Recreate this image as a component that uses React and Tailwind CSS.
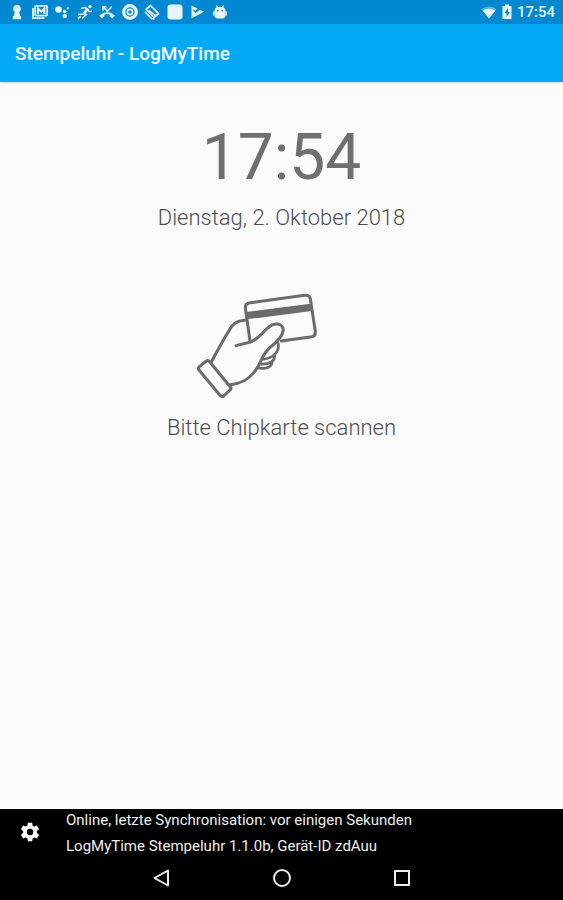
function StatusIcon({ children }) {
  return (
    <svg viewBox="0 0 16 16" className="size-4" fill="none" stroke="none" aria-hidden="true">
      {children}
    </svg>
  )
}

function StatusBar() {
  return (
    <div className="flex h-6 items-center justify-between bg-[#0288d1] pl-[9px] pr-2 text-[#e6f5fd]">
      <div className="flex w-[219px] justify-between">
        <StatusIcon>
          <path fill="currentColor" d="M8 0.8a4 4 0 0 1 2.3 7.2L11 11.5l1.2 1v2.7H3.8v-2.7l1.2-1L5.7 8A4 4 0 0 1 8 0.8z" />
        </StatusIcon>
        <StatusIcon>
          <path stroke="currentColor" strokeWidth="1.8" d="M1 4v10.2h11.5" />
          <rect x="3.2" y="1.8" width="12" height="9.8" rx="1" stroke="currentColor" strokeWidth="1.8" />
          <path stroke="currentColor" strokeWidth="2" d="M6 10V4.5l3.2 3.2 3.2-3.2V10" />
        </StatusIcon>
        <StatusIcon>
          <circle cx="4.5" cy="5.5" r="3.3" fill="currentColor" />
          <circle cx="10.7" cy="7.5" r="1.8" fill="currentColor" />
          <circle cx="13.8" cy="4.3" r="1.1" fill="currentColor" />
          <circle cx="10.8" cy="12" r="2.2" fill="currentColor" />
        </StatusIcon>
        <StatusIcon>
          <circle cx="13" cy="2.6" r="1.7" fill="currentColor" />
          <path stroke="currentColor" strokeWidth="1.6" strokeLinejoin="round" d="M4 4.5l4-1 3 2-4 4.5-6 .5M7 9.5l2.5 1-4.5 4M11 5.5l1 2h3M0.8 14.5l3-2" />
          <path stroke="currentColor" strokeWidth="2" d="M10 5L6.5 9.5" />
        </StatusIcon>
        <StatusIcon>
          <path stroke="currentColor" strokeWidth="1.5" d="M4 6.5V2.8h3.5M4 2.8l4.3 4.3 4.4-4.4" />
          <path fill="currentColor" d="M8 8.3c3 0 5.6 1.1 7.4 2.9.3.3.3.6 0 .9l-1.8 1.8c-.3.3-.6.3-.9 0l-2-1.4v-2a9 9 0 0 0-5.4 0v2l-2 1.4c-.3.3-.6.3-.9 0L.6 12.1c-.3-.3-.3-.6 0-.9A10.6 10.6 0 0 1 8 8.3z" />
        </StatusIcon>
        <StatusIcon>
          <circle cx="8" cy="8" r="6.3" stroke="currentColor" strokeWidth="3.2" />
          <circle cx="8" cy="8" r="2.6" stroke="currentColor" strokeWidth="1.6" />
        </StatusIcon>
        <StatusIcon>
          <path stroke="currentColor" strokeWidth="1.7" strokeLinejoin="round" d="M6.500 1.500L14.500 9.500 10 13.500 2 5.500z" />
          <path stroke="currentColor" strokeWidth="1.6" d="M1 8l6.500 6.500 3 .5M4.500 6.500l7 5" />
        </StatusIcon>
        <StatusIcon>
          <rect x="0.5" y="0.5" width="15" height="15" rx="3" fill="currentColor" />
        </StatusIcon>
        <StatusIcon>
          <path fill="currentColor" d="M2.5 1.5L8.5 4.5 6.5 7 4.8 5.5 4 6.5 6.8 9 11 5.7 15 7.8 2.5 14.5z" />
        </StatusIcon>
        <StatusIcon>
          <path stroke="currentColor" strokeWidth="1.3" d="M4.5 1.5L6 4M11.5 1.5L10 4" />
          <path fill="currentColor" fillRule="evenodd" d="M2.5 7a4 4 0 0 1 4-4h3a4 4 0 0 1 4 4v4a3 3 0 0 1-3 3.500h-5a3 3 0 0 1-3-3.500zM5 6v1.500h1.500V6zM9.500 6v1.500H11V6z" />
          <path stroke="currentColor" strokeWidth="1.5" d="M1.8 7.500v4M14.200 7.500v4" />
        </StatusIcon>
      </div>
      <div className="flex items-center">
        <svg viewBox="0 0 16 16" className="size-4" aria-hidden="true">
          <path fill="currentColor" opacity="0.4" d="M8 14.500L0.500 5.200a12 12 0 0 1 15 0z" />
          <path fill="currentColor" d="M8 14.500L1.800 6.800a10 10 0 0 1 12.400 0z" />
        </svg>
        <svg viewBox="0 0 12 16" className="ml-1 h-4 w-3" aria-hidden="true">
          <path fill="currentColor" fillRule="evenodd" d="M4 .5h4V2h2.500v13h-9V2H4zM7 4L3.500 9h2v4L9 8H7z" />
        </svg>
        <span className="ml-1 text-[15px] font-medium">17:54</span>
      </div>
    </div>
  )
}

function CardHand() {
  return (
    <svg
      viewBox="45 36 519 324"
      className="h-[108px] w-[173px] text-[#6b6b6b]"
      fill="none"
      stroke="currentColor"
      strokeWidth="9"
      strokeLinecap="round"
      strokeLinejoin="round"
      role="img"
      aria-label="Chipkarte"
    >
      <path d="M210 182L196 84Q195 72 207 69L374 46Q388 44 391 56L406 155Q407 167 396 170L304 183" />
      <path d="M199 107L394 82" strokeWidth="22" strokeLinecap="butt" />
      <path d="M198 120Q170 122 158 136Q146 150 94 246" />
      <path d="M168 197L212 186C238 178 252 146 278 134C298 127 312 138 309 154C306 170 296 180 282 192C250 216 248 234 236 256C218 290 194 310 150 314" />
      <path d="M294 188C300 212 284 234 248 238M284 222C286 246 268 254 238 252M276 246C276 262 258 268 232 264" strokeWidth="8" />
      <path d="M58 260L79 243Q84 239 89 245L151 321Q155 326 150 330L131 348Q126 352 121 347L57 270Q53 265 58 260Z" />
    </svg>
  )
}

function SettingsIcon() {
  return (
    <svg viewBox="0 0 24 24" className="size-[22px]" fill="currentColor" aria-hidden="true">
      <path d="M19.430 12.980c.04-.32.07-.64.07-.98s-.03-.66-.07-.98l2.110-1.650c.19-.15.240-.42.120-.64l-2-3.460c-.12-.22-.39-.3-.61-.22l-2.490 1c-.52-.4-1.080-.73-1.690-.98l-.38-2.650A.49.49 0 0 0 14 2h-4c-.25 0-.46.18-.49.42l-.38 2.650c-.61.25-1.170.59-1.690.98l-2.490-1c-.23-.09-.49 0-.61.22l-2 3.460c-.13.22-.07.49.120.64l2.110 1.650c-.04.32-.07.65-.07.98s.03.66.07.98l-2.110 1.650c-.19.15-.24.42-.12.64l2 3.460c.12.22.39.3.61.22l2.490-1c.52.4 1.080.73 1.690.98l.38 2.650c.03.24.24.42.49.42h4c.25 0 .46-.18.49-.42l.38-2.650c.61-.25 1.170-.59 1.690-.98l2.490 1c.23.09.49 0 .61-.22l2-3.460c.12-.22.07-.49-.12-.64zM12 15.500a3.500 3.500 0 1 1 0-7 3.500 3.500 0 0 1 0 7z" />
    </svg>
  )
}

function NavButton({ label, children }) {
  return (
    <button type="button" aria-label={label} className="flex h-8 flex-1 items-center justify-center">
      <svg viewBox="0 0 20 20" className="size-5" fill="none" stroke="currentColor" strokeWidth="2" strokeLinejoin="round">
        {children}
      </svg>
    </button>
  )
}

export default function App() {
  return (
    <div className="flex min-h-screen flex-col bg-[#fafafa] font-['Roboto',sans-serif]">
      <StatusBar />
      <header className="flex h-[58px] items-center bg-[#03a9f4] px-[15px] pt-0.5 shadow-sm">
        <h1 className="text-[19px] font-medium text-[#f2fbff]">Stempeluhr - LogMyTime</h1>
      </header>

      <main className="flex flex-1 flex-col items-center pt-[38px] text-[#6f6f6f]">
        <time className="text-[64px] leading-[76px]">17:54</time>
        <p className="mt-1.5 text-[22px] font-light leading-8 text-[#4f4f4f]">Dienstag, 2. Oktober 2018</p>
        <div className="mt-[58px]">
          <CardHand />
        </div>
        <p className="mt-3 text-[22px] font-light leading-8 text-[#4f4f4f]">Bitte Chipkarte scannen</p>
      </main>

      <footer className="bg-black text-[#eeeeee]">
        <div className="flex h-[53px] items-center pb-1.5">
          <button type="button" aria-label="Einstellungen" className="flex w-[60px] justify-center pb-0.5 text-white">
            <SettingsIcon />
          </button>
          <div className="ml-1.5 text-[15px] leading-[26px]">
            <p>Online, letzte Synchronisation: vor einigen Sekunden</p>
            <p>LogMyTime Stempeluhr 1.1.0b, Gerät-ID zdAuu</p>
          </div>
        </div>
        <nav className="mx-auto flex h-[38px] max-w-[360px] pb-1.5">
          <NavButton label="Zurück">
            <path d="M16 2.500v15L2.500 10z" />
          </NavButton>
          <NavButton label="Startseite">
            <circle cx="10" cy="10" r="8" />
          </NavButton>
          <NavButton label="Übersicht">
            <rect x="3" y="3" width="14" height="14" />
          </NavButton>
        </nav>
      </footer>
    </div>
  )
}
